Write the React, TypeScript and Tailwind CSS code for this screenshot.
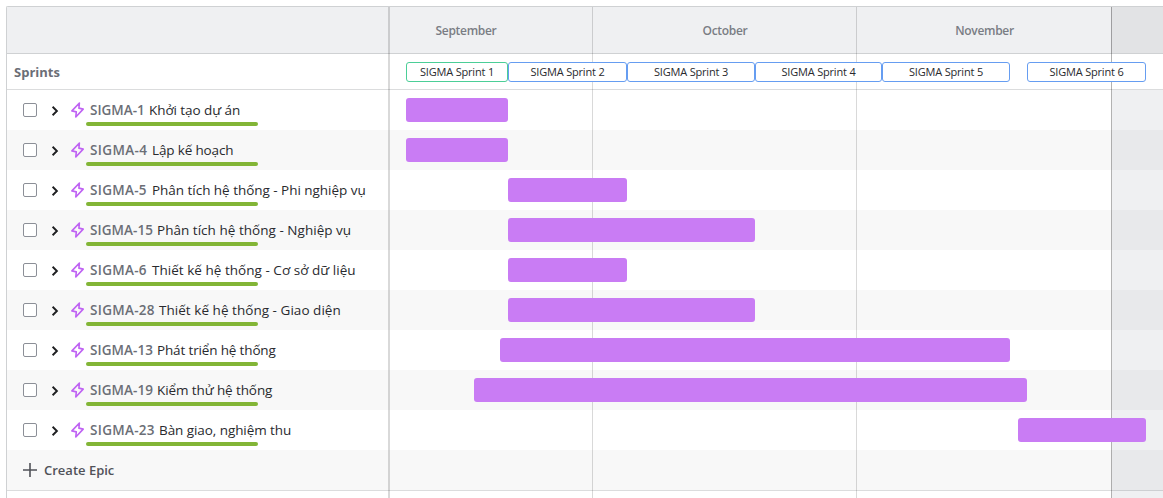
type Sprint = { name: string; start: number; end: number; active?: boolean };
type Epic = {
  id: string;
  title: string;
  start: number;
  end: number;
  idWidth: number;
  idTracking: number;
  tracking: number;
};

const ORIGIN = 390;

const sprints: Sprint[] = [
  { name: 'SIGMA Sprint 1', start: 406, end: 508, active: true },
  { name: 'SIGMA Sprint 2', start: 508, end: 627 },
  { name: 'SIGMA Sprint 3', start: 627, end: 755 },
  { name: 'SIGMA Sprint 4', start: 755, end: 882 },
  { name: 'SIGMA Sprint 5', start: 882, end: 1010 },
  { name: 'SIGMA Sprint 6', start: 1027, end: 1146 },
];

const epics: Epic[] = [
  { id: 'SIGMA-1', title: 'Khởi tạo dự án', start: 406, end: 508, idWidth: 59, idTracking: 0, tracking: -0.07 },
  { id: 'SIGMA-4', title: 'Lập kế hoạch', start: 406, end: 508, idWidth: 62, idTracking: 0.35, tracking: -0.15 },
  { id: 'SIGMA-5', title: 'Phân tích hệ thống - Phi nghiệp vụ', start: 508, end: 627, idWidth: 62, idTracking: 0.3, tracking: -0.03 },
  { id: 'SIGMA-15', title: 'Phân tích hệ thống - Nghiệp vụ', start: 508, end: 755, idWidth: 67, idTracking: 0.08, tracking: 0.03 },
  { id: 'SIGMA-6', title: 'Thiết kế hệ thống - Cơ sở dữ liệu', start: 508, end: 627, idWidth: 62, idTracking: 0.3, tracking: 0.03 },
  { id: 'SIGMA-28', title: 'Thiết kế hệ thống - Giao diện', start: 508, end: 755, idWidth: 69, idTracking: 0.3, tracking: 0.04 },
  { id: 'SIGMA-13', title: 'Phát triển hệ thống', start: 500, end: 1010, idWidth: 67, idTracking: 0.08, tracking: -0.15 },
  { id: 'SIGMA-19', title: 'Kiểm thử hệ thống', start: 474, end: 1027, idWidth: 67, idTracking: 0.08, tracking: -0.1 },
  { id: 'SIGMA-23', title: 'Bàn giao, nghiệm thu', start: 1018, end: 1146, idWidth: 69, idTracking: 0.3, tracking: -0.07 },
];

function Chevron() {
  return (
    <svg className="ml-[14px] mt-px h-3 w-2 shrink-0" viewBox="0 0 8 12" fill="none" stroke="#1e1f21" strokeWidth="1.9">
      <path d="M1.6 1.8 L5.9 6 L1.6 10.2" />
    </svg>
  );
}

function Bolt() {
  return (
    <svg className="ml-3 h-4 w-[14px] shrink-0" viewBox="0 0 14 16" fill="none" stroke="#bf63f3" strokeWidth="1.6" strokeLinejoin="round">
      <path d="M8.4 1 L0.9 8.9 L5.3 9.9 L4.8 15 L12.2 7.1 L7.9 6.1 Z" />
    </svg>
  );
}

function EpicRow({ epic, shaded }: { epic: Epic; shaded: boolean }) {
  return (
    <div className={shaded ? 'flex h-10 bg-[#f8f8f8]' : 'flex h-10 bg-white'}>
      <div className="relative flex w-[383px] shrink-0 items-center pl-4">
        <span className="h-[14px] w-[14px] shrink-0 rounded-[2px] border border-[#8c8f97] bg-white" />
        <Chevron />
        <Bolt />
        <span
          className="ml-[5px] shrink-0 whitespace-nowrap text-[13.5px] font-semibold leading-5 text-[#6b6e76]"
          style={{ width: epic.idWidth, letterSpacing: epic.idTracking }}
        >
          {epic.id}
        </span>
        <span className="whitespace-nowrap text-[13.5px] leading-5 text-[#292a2e]" style={{ letterSpacing: epic.tracking }}>
          {epic.title}
        </span>
        <span className="absolute left-[79px] top-8 h-1 w-[172px] rounded-full bg-[#82b536]" />
      </div>
      <div className="flex flex-1 items-center">
        <div
          className="relative z-20 h-6 shrink-0 rounded-[3px] bg-[#c97cf4]"
          style={{ marginLeft: epic.start - ORIGIN, width: epic.end - epic.start }}
        />
      </div>
    </div>
  );
}

export default function App() {
  return (
    <div className="h-[498px] w-[1163px] overflow-hidden bg-white pl-[6px] pt-[6px] font-['Open_Sans','Noto_Sans',sans-serif]">
      <div className="relative h-[492px] overflow-hidden rounded-tl-[2px] border-l border-t border-[#cfd1d3]">
        <div className="flex h-[47px] border-b border-[#cfd1d3] bg-[#eff0f2] text-[12px] font-semibold tracking-[-0.3px] text-[#7a7d84]">
          <div className="w-[383px] shrink-0" />
          <div className="flex w-[202px] items-center justify-center pr-[50px] pt-[2px]">September</div>
          <div className="flex w-[264px] items-center justify-center pl-[2px] pt-[2px]">October</div>
          <div className="flex w-[255px] items-center justify-center pl-[2px] pt-[2px]">November</div>
          <div className="flex-1 bg-[#e2e3e5]" />
        </div>

        <div className="flex h-9 border-b border-[#dbdcdd] bg-white">
          <div className="flex w-[383px] shrink-0 items-center pl-[7px] pt-[2px] text-[13px] font-bold text-[#6b6e76]">Sprints</div>
          <div className="flex flex-1 items-center">
            {sprints.map((s, i) => (
              <div
                key={s.name}
                className={
                  s.active
                    ? 'relative z-20 flex h-5 shrink-0 items-center justify-center whitespace-nowrap rounded-[3px] border border-[#4bce97] bg-white pt-[2px] text-[11px] tracking-[-0.18px] text-[#292a2e]'
                    : 'relative z-20 flex h-5 shrink-0 items-center justify-center whitespace-nowrap rounded-[3px] border border-[#669df1] bg-white pt-[2px] text-[11px] tracking-[-0.18px] text-[#292a2e]'
                }
                style={{ marginLeft: s.start - (i ? sprints[i - 1].end : ORIGIN), width: s.end - s.start }}
              >
                {s.name}
              </div>
            ))}
          </div>
        </div>

        {epics.map((e, i) => (
          <EpicRow key={e.id} epic={e} shaded={i % 2 === 1} />
        ))}

        <div className="flex h-[41px] items-center border-b border-[#dbdcdd] bg-[#f8f8f8] pl-4 text-[13px] font-semibold text-[#505258]">
          <svg className="mr-[7px] h-[14px] w-[14px]" viewBox="0 0 14 14" stroke="#505258" strokeWidth="1.6">
            <path d="M7 0 V14 M0 7 H14" />
          </svg>
          <span className="pt-px">Create Epic</span>
        </div>

        <div className="pointer-events-none absolute inset-0 z-10">
          <div className="absolute bottom-0 left-[381px] top-0 w-[2px] bg-black/15" />
          <div className="absolute bottom-0 left-[585px] top-0 w-px bg-black/15" />
          <div className="absolute bottom-0 left-[849px] top-0 w-px bg-black/15" />
          <div className="absolute bottom-0 left-[1104px] top-0 w-px bg-black/30" />
          <div className="absolute bottom-0 left-[1105px] right-0 top-[83px] bg-[#091e42]/[0.065]" />
        </div>
      </div>
    </div>
  );
}
